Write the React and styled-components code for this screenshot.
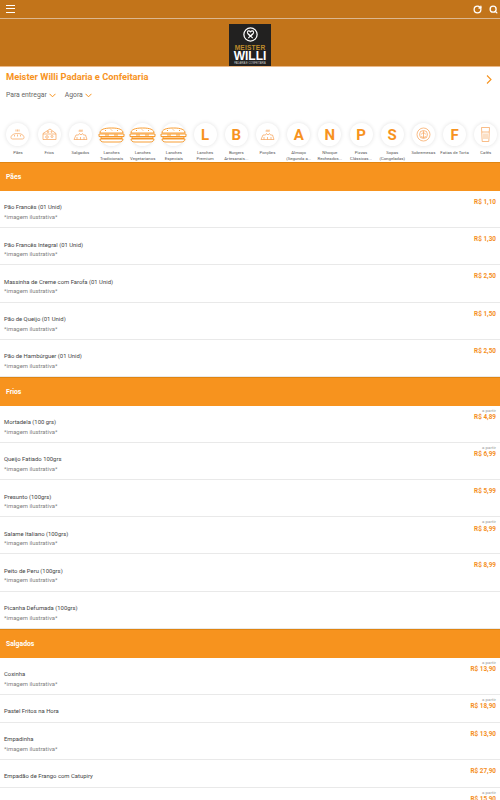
import styled, {createGlobalStyle} from 'styled-components'
import {RotateCw, Search} from 'lucide-react'

const ORANGE = '#f7931e'

const GlobalStyle = createGlobalStyle`
  html, body {
    margin: 0;
    padding: 0;
    overflow: hidden;
    background: #fff;
    font-family: Roboto, "Liberation Sans", sans-serif;
  }
`

const Page = styled.div`
  width: 500px;
  height: 800px;
  overflow: hidden;
  background: #fff;
`

const TopBar = styled.header`
  height: 18px;
  background: #c2741a;
  border-bottom: 1px solid #dcb78f;
  display: flex;
  align-items: center;
  justify-content: space-between;
  padding: 0 2px 0 6px;
`

const Burger = styled.div`
  width: 9px;
  height: 6px;
  border-top: 1px solid #fff;
  border-bottom: 1px solid #fff;
  &::after {
    content: '';
    display: block;
    height: 1px;
    margin-top: 2px;
    background: #fff;
  }
`

const TopIcons = styled.div`
  display: flex;
  align-items: center;
  gap: 7px;
  color: #fff;
`

const Banner = styled.div`
  height: 47px;
  background: #c2741a;
  border-bottom: 1px solid #eab98a;
  display: flex;
  justify-content: center;
  align-items: flex-end;
`

const Logo = styled.div`
  width: 42px;
  height: 42px;
  background: #222120;
  display: flex;
  flex-direction: column;
  align-items: center;
  font-family: "Liberation Sans", sans-serif;
  overflow: hidden;
`

const PretzelSvg = styled.svg`
  flex: none;
  margin-top: 3px;
`

const LogoGold = styled.div`
  color: #bd8b2b;
  font-size: 6.6px;
  line-height: 6px;
  font-weight: 700;
  letter-spacing: 0.2px;
  margin-top: 3px;
`

const LogoWhite = styled.div`
  color: #fff;
  font-size: 12px;
  line-height: 9px;
  font-weight: 700;
  margin-top: 1px;
`

const LogoSmall = styled.div`
  color: #ccc;
  font-size: 2.6px;
  line-height: 3px;
  margin-top: 1px;
  white-space: nowrap;
`

const Info = styled.section`
  height: 51px;
  padding: 4px 8px 0 6px;
  box-sizing: border-box;
`

const TitleRow = styled.div`
  display: flex;
  justify-content: space-between;
  align-items: flex-start;
`

const Title = styled.h1`
  margin: 0;
  font-size: 9.3px;
  line-height: 11px;
  font-weight: 700;
  color: ${ORANGE};
`

const ChevronRight = styled.svg`
  margin-top: 4px;
`

const Selectors = styled.div`
  display: flex;
  gap: 9px;
  margin-top: 7px;
`

const Selector = styled.div`
  display: flex;
  align-items: center;
  gap: 2px;
  font-size: 6.8px;
  line-height: 9px;
  color: #666;
`

const Categories = styled.nav`
  height: 44.2px;
  display: flex;
  padding-left: 2.4px;
`

const Category = styled.div`
  flex: 0 0 31.2px;
  display: flex;
  flex-direction: column;
  align-items: center;
  padding-top: 5px;
  box-sizing: border-box;
`

const Circle = styled.div`
  width: 23px;
  height: 23px;
  flex: none;
  border-radius: 50%;
  background: #fff;
  box-shadow: 0 0 4px rgba(0, 0, 0, 0.12);
  display: flex;
  align-items: center;
  justify-content: center;
  color: ${ORANGE};
  font-size: 15px;
  font-weight: 700;
`

const CategoryLabel = styled.div`
  margin-top: 4px;
  width: 31px;
  text-align: center;
  font-size: 4.3px;
  line-height: 5.6px;
  color: #555;
  white-space: pre;
`

const SandwichSvg = styled.svg`
  flex: none;
`

const SectionHeader = styled.div`
  height: 28.8px;
  box-sizing: border-box;
  background: ${ORANGE};
  border-top: 1px solid #e08512;
  display: flex;
  align-items: center;
  padding-left: 6px;
  color: #fff;
  font-size: 6.8px;
  font-weight: 700;
`

const Row = styled.div`
  height: ${props => (props.$short ? 27.8 : 37.2)}px;
  box-sizing: border-box;
  border-bottom: 1px solid #e9e9e9;
  display: flex;
  justify-content: space-between;
  padding: 0 4px;
`

const RowText = styled.div`
  padding-top: 12.5px;
`

const Name = styled.div`
  font-size: 5.9px;
  line-height: 8px;
  color: #444;
`

const Description = styled.div`
  margin-top: 1.5px;
  font-size: 5.9px;
  line-height: 8px;
  color: #808080;
`

const PriceBox = styled.div`
  text-align: right;
  padding-top: ${props => (props.$from ? 2 : 7)}px;
`

const From = styled.div`
  font-size: 4.4px;
  line-height: 5.5px;
  color: #999;
`

const Price = styled.div`
  font-size: 6.4px;
  line-height: 9px;
  font-weight: 700;
  color: #f58f1f;
`

const Chevron = () => (
  <svg width="7" height="5" viewBox="0 0 7 5" fill="none" stroke={ORANGE} strokeWidth="1">
    <path d="M0.5 0.8 L3.5 3.8 L6.5 0.8" />
  </svg>
)

const IconSvg = ({children}) => (
  <svg width="17" height="17" viewBox="0 0 17 17" fill="none" stroke="#f6a055" strokeWidth="0.7">
    {children}
  </svg>
)

const BreadIcon = () => (
  <IconSvg>
    <path d="M2 11.5c0-2.5 3-4 6.5-4s6.5 1.5 6.5 4c0 1-.7 1.5-1.5 1.5h-10C2.7 13 2 12.5 2 11.5z" />
    <path d="M5.5 9v1.5M8.5 8.5v2M11.5 9v1.5M7 3.5v2M8.5 3.5v2M10 3.5v2" />
  </IconSvg>
)

const CheeseIcon = () => (
  <IconSvg>
    <path d="M2 7.5L9 3l6 4.5v6H2z" />
    <path d="M2 8h13" />
    <circle cx="6" cy="11" r="1.3" />
    <circle cx="11" cy="10.5" r="1" />
    <circle cx="7" cy="5.8" r="0.8" />
    <circle cx="10.5" cy="5.8" r="0.6" />
  </IconSvg>
)

const PastryIcon = () => (
  <IconSvg>
    <path d="M2 13.5h13l-1.5-4.5h-2l-1-1.5-1.5 1.5-1.5-1.5-1 1.5h-2.5z" />
    <path d="M5 13.5v-2.5M8.5 13.5v-2.5M12 13.5v-2.5M6.5 5h4M8 3.5v2M10 3.5v2" />
  </IconSvg>
)

const SandwichIcon = () => (
  <SandwichSvg width="27" height="18" viewBox="0 0 27 18" fill="none" stroke={ORANGE} strokeWidth="0.9">
    <path d="M2 7c0-3.5 4-5 11.5-5S25 3.5 25 7z" />
    <path d="M1 8h25v2.5H1z" />
    <path d="M3 11h21v1.5H3z" />
    <path d="M2 13h23c0 2-1.5 3-4 3H6c-2.5 0-4-1-4-3z" />
    <path d="M7 4l1 1M13 3.5l1 1M19 4l1 1M7 9h4M16 9h4" />
  </SandwichSvg>
)

const DessertIcon = () => (
  <IconSvg>
    <circle cx="8.5" cy="8.5" r="6.5" />
    <circle cx="8.5" cy="8.5" r="4" />
    <path d="M6 8.5c1-2 4-2 5 0M8.5 5v7M6 10.5c1 1 4 1 5 0" />
  </IconSvg>
)

const CoffeeIcon = () => (
  <IconSvg>
    <path d="M4.5 1.5h8l-.7 14H5.2z" />
    <path d="M5 6h7" />
    <path d="M6 7.5h5V13H6z" fill="#fbe0c6" stroke="none" />
  </IconSvg>
)

const PretzelMark = () => (
  <PretzelSvg width="15" height="15" viewBox="0 0 17 17" fill="none" stroke="#fff">
    <circle cx="8.5" cy="8.5" r="7.5" strokeWidth="1.4" />
    <path d="M8.5 10.5C6 8.5 4.5 7 5 5.5c.5-1.5 2.5-1.5 3.5 0 1-1.5 3-1.5 3.5 0 .5 1.5-1 3-3.5 5zM6 12.5l5-5M11 12.5l-5-5" strokeWidth="1.2" />
  </PretzelSvg>
)

const categories = [
  {label: 'Pães', icon: <BreadIcon />},
  {label: 'Frios', icon: <CheeseIcon />},
  {label: 'Salgados', icon: <PastryIcon />},
  {label: 'Lanches\nTradicionais', icon: <SandwichIcon />},
  {label: 'Lanches\nVegetarianos', icon: <SandwichIcon />},
  {label: 'Lanches\nEspeciais', icon: <SandwichIcon />},
  {label: 'Lanches\nPremium', icon: 'L'},
  {label: 'Burgers\nArtesanais...', icon: 'B'},
  {label: 'Porções', icon: <PastryIcon />},
  {label: 'Almoço\n(Segunda a...', icon: 'A'},
  {label: 'Nhoque\nRecheados...', icon: 'N'},
  {label: 'Pizzas\nClássicas...', icon: 'P'},
  {label: 'Sopas\n(Congeladas)', icon: 'S'},
  {label: 'Sobremesas', icon: <DessertIcon />},
  {label: 'Fatias de Torta', icon: 'F'},
  {label: 'Cafés', icon: <CoffeeIcon />},
]

const IMG = '*imagem ilustrativa*'

const sections = [
  {
    title: 'Pães',
    items: [
      {name: 'Pão Francês (01 Unid)', desc: IMG, price: '1,10'},
      {name: 'Pão Francês Integral (01 Unid)', desc: IMG, price: '1,30'},
      {name: 'Massinha de Creme com Farofa (01 Unid)', desc: IMG, price: '2,50'},
      {name: 'Pão de Queijo (01 Unid)', desc: IMG, price: '1,50'},
      {name: 'Pão de Hambúrguer (01 Unid)', desc: IMG, price: '2,50'},
    ],
  },
  {
    title: 'Frios',
    items: [
      {name: 'Mortadela (100 grs)', desc: IMG, price: '4,89', from: true},
      {name: 'Queijo Fatiado 100grs', desc: IMG, price: '6,99', from: true},
      {name: 'Presunto (100grs)', desc: IMG, price: '5,99'},
      {name: 'Salame Italiano (100grs)', desc: IMG, price: '8,99', from: true},
      {name: 'Peito de Peru (100grs)', desc: IMG, price: '8,99'},
      {name: 'Picanha Defumada (100grs)', desc: IMG},
    ],
  },
  {
    title: 'Salgados',
    items: [
      {name: 'Coxinha', desc: IMG, price: '13,90', from: true},
      {name: 'Pastel Fritos na Hora', price: '18,90', from: true},
      {name: 'Empadinha', desc: IMG, price: '13,90'},
      {name: 'Empadão de Frango com Catupiry', price: '27,90'},
      {name: '', price: '15,90', from: true},
    ],
  },
]

function App() {
  return (
    <Page>
      <GlobalStyle />
      <TopBar>
        <Burger />
        <TopIcons>
          <RotateCw size={9} strokeWidth={3.5} />
          <Search size={9} strokeWidth={3.5} />
        </TopIcons>
      </TopBar>
      <Banner>
        <Logo>
          <PretzelMark />
          <LogoGold>MEISTER</LogoGold>
          <LogoWhite>WILLI</LogoWhite>
          <LogoSmall>PADARIA E CONFEITARIA</LogoSmall>
        </Logo>
      </Banner>
      <Info>
        <TitleRow>
          <Title>Meister Willi Padaria e Confeitaria</Title>
          <ChevronRight width="6" height="9" viewBox="0 0 6 9" fill="none" stroke={ORANGE} strokeWidth="1.1">
            <path d="M1 0.5L5 4.5L1 8.5" />
          </ChevronRight>
        </TitleRow>
        <Selectors>
          <Selector>Para entregar <Chevron /></Selector>
          <Selector>Agora <Chevron /></Selector>
        </Selectors>
      </Info>
      <Categories>
        {categories.map(category => (
          <Category key={category.label}>
            <Circle>{category.icon}</Circle>
            <CategoryLabel>{category.label}</CategoryLabel>
          </Category>
        ))}
      </Categories>
      {sections.map(section => (
        <div key={section.title}>
          <SectionHeader>{section.title}</SectionHeader>
          {section.items.map((item, index) => (
            <Row key={index} $short={!item.desc}>
              <RowText>
                <Name>{item.name}</Name>
                {item.desc && <Description>{item.desc}</Description>}
              </RowText>
              {item.price && (
                <PriceBox $from={item.from}>
                  {item.from && <From>a partir</From>}
                  <Price>R$ {item.price}</Price>
                </PriceBox>
              )}
            </Row>
          ))}
        </div>
      ))}
    </Page>
  )
}

export default App
